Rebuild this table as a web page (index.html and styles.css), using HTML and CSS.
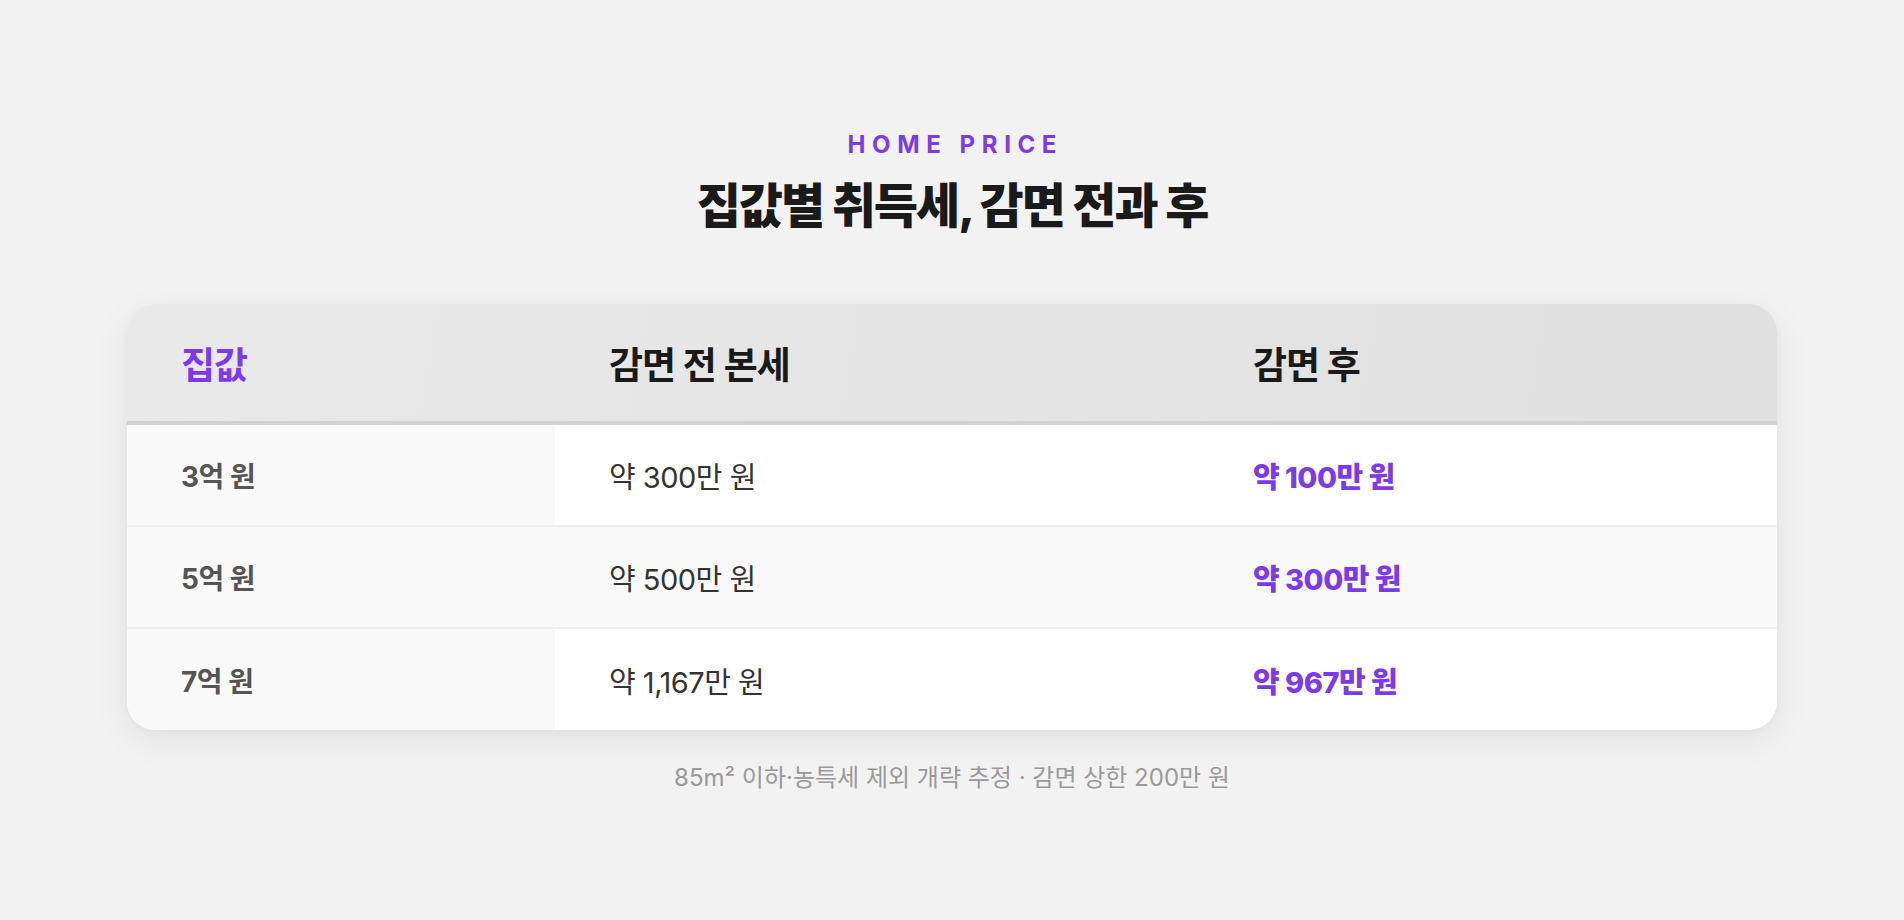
FILE: index.html
```html
<!DOCTYPE html>
<html lang="ko">
<head>
<meta charset="utf-8">
<title>집값별 취득세, 감면 전과 후</title>
<link rel="stylesheet" href="styles.css">
</head>
<body>
<main class="page">
  <header class="intro">
    <p class="eyebrow">HOME PRICE</p>
    <h1 class="title">집값별 취득세, 감면 전과 후</h1>
  </header>
  <section class="table">
    <div class="row head">
      <div class="cell c1 accent">집값</div>
      <div class="cell c2">감면 전 본세</div>
      <div class="cell c3">감면 후</div>
    </div>
    <div class="row">
      <div class="cell c1 price">3억 원</div>
      <div class="cell c2">약 300만 원</div>
      <div class="cell c3 after">약 100만 원</div>
    </div>
    <div class="row alt">
      <div class="cell c1 price">5억 원</div>
      <div class="cell c2">약 500만 원</div>
      <div class="cell c3 after">약 300만 원</div>
    </div>
    <div class="row last">
      <div class="cell c1 price">7억 원</div>
      <div class="cell c2">약 1,167만 원</div>
      <div class="cell c3 after">약 967만 원</div>
    </div>
  </section>
  <p class="note">85m² 이하·농특세 제외 개략 추정 · 감면 상한 200만 원</p>
</main>
</body>
</html>
```

FILE: styles.css
```css
* { box-sizing: border-box; }
html, body { margin: 0; padding: 0; }
body {
  background: #f2f2f2;
  font-family: "Inter", "Noto Sans CJK KR", sans-serif;
  color: #1a1a1a;
}
.page {
  width: 1904px;
  height: 920px;
  padding: 132px 127px 0;
  display: flex;
  flex-direction: column;
  align-items: stretch;
}
.intro {
  display: flex;
  flex-direction: column;
  align-items: center;
}
.eyebrow {
  margin: 0;
  font-size: 24px;
  line-height: 26px;
  font-weight: 700;
  letter-spacing: 6.6px;
  margin-right: -6.6px;
  color: #7c3aed;
}
.title {
  margin: 18px 0 0;
  font-size: 48px;
  line-height: 60px;
  font-weight: 800;
  letter-spacing: -2px;
  color: #1a1a1a;
}
.table {
  margin-top: 68px;
  background: #ffffff;
  border-radius: 28px;
  overflow: hidden;
  box-shadow: 0 10px 36px rgba(0, 0, 0, 0.07), 0 2px 6px rgba(0, 0, 0, 0.03);
}
.row {
  display: grid;
  grid-template-columns: 428px 644px 1fr;
  height: 102px;
  border-bottom: 2px solid #efefef;
}
.row.last { border-bottom: 0; height: 101px; }
.row.head {
  height: 121px;
  background: linear-gradient(100deg, #e9e9e9 0%, #e5e5e5 50%, #e0e0e0 100%);
  border-bottom: 4px solid #d2d2d2;
}
.cell {
  display: flex;
  align-items: center;
  padding-left: 54px;
  font-size: 29px;
  color: #333333;
  letter-spacing: -0.5px;
}
.head .cell {
  font-size: 37px;
  font-weight: 700;
  color: #1a1a1a;
  letter-spacing: -1px;
}
.head .cell.accent { color: #7c3aed; }
.cell.c1 { background: #f9f9f9; }
.head .cell.c1 { background: transparent; }
.row.alt { background: #f9f9f9; }
.cell.price {
  font-size: 28px;
  font-weight: 700;
  color: #555555;
}
.cell.after {
  font-weight: 800;
  color: #7c3aed;
}
.note {
  margin: 33px 0 0;
  text-align: center;
  font-size: 24px;
  line-height: 30px;
  color: #999999;
}
```
